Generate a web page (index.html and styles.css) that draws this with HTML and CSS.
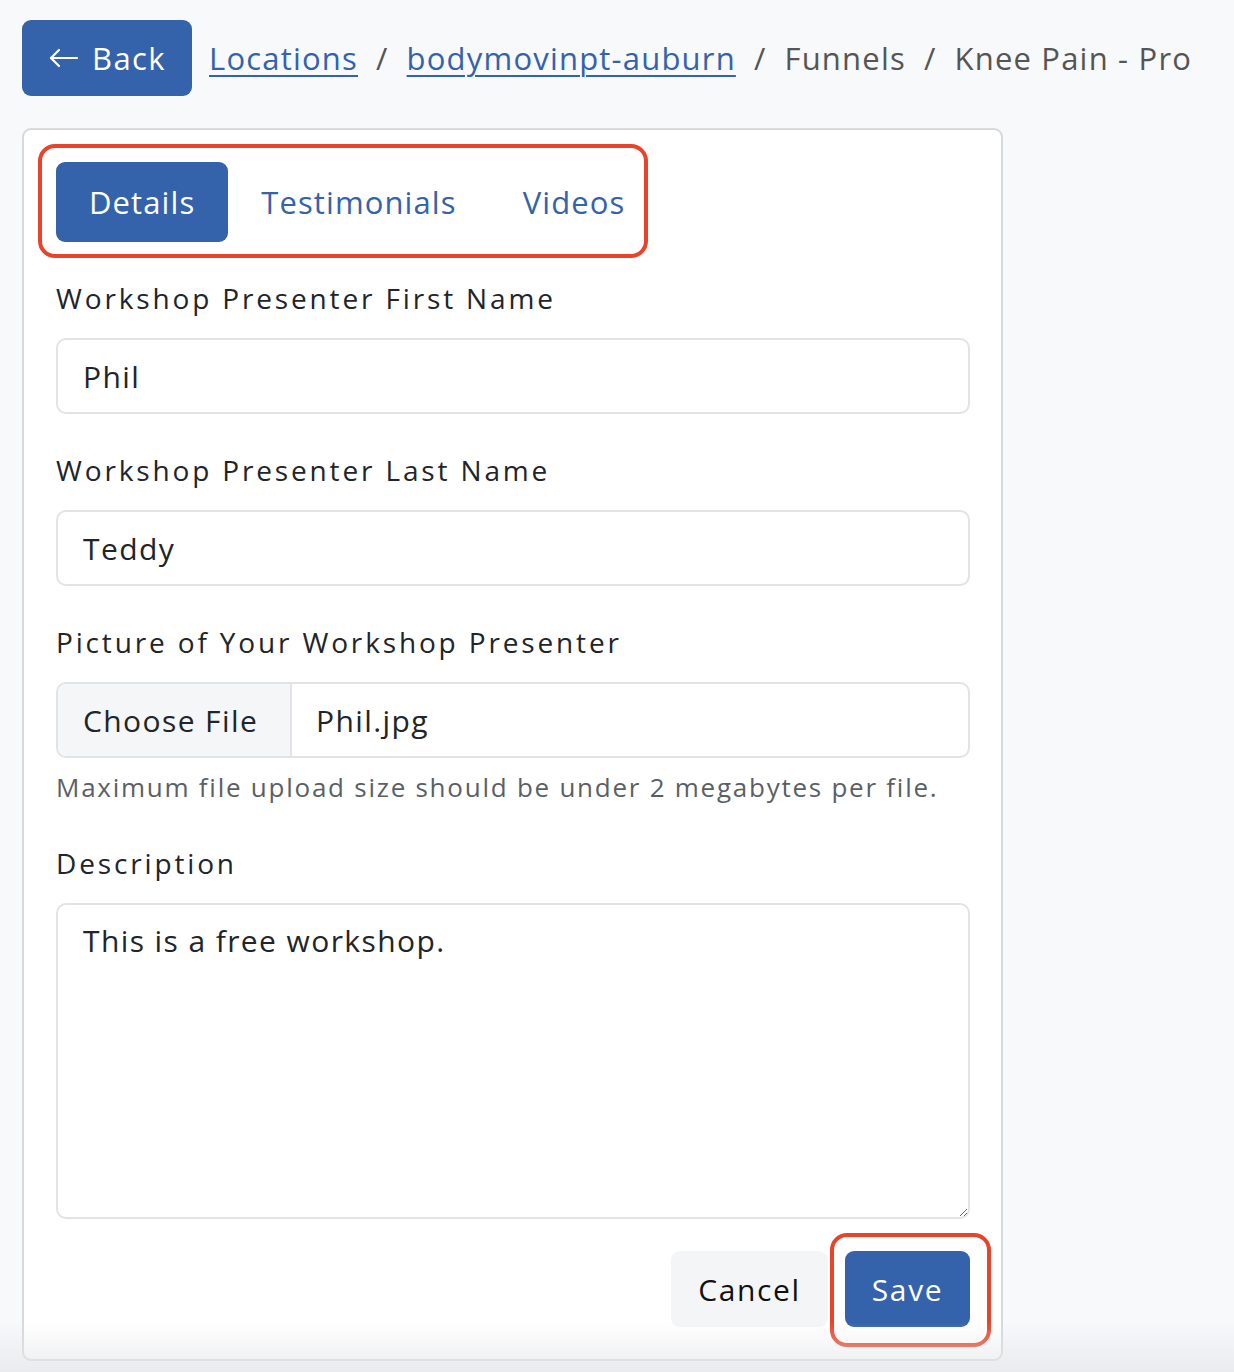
FILE: index.html
```html
<!DOCTYPE html>
<html lang="en">
<head>
<meta charset="utf-8">
<title>Knee Pain - Pro</title>
<link rel="stylesheet" href="styles.css">
</head>
<body>
<div class="page">
  <header class="topbar">
    <a class="back-btn" href="#"><svg class="back-arrow" width="30" height="20" viewBox="0 0 30 20" fill="none" stroke="#fff" stroke-width="2.2" stroke-linecap="round" stroke-linejoin="round"><path d="M28 10H2"/><path d="M10 2L2 10l8 8"/></svg><span>Back</span></a>
    <nav class="crumbs">
      <a href="#" class="crumb-link">Locations</a>
      <span class="sep">/</span>
      <a href="#" class="crumb-link">bodymovinpt-auburn</a>
      <span class="sep">/</span>
      <span class="crumb">Funnels</span>
      <span class="sep">/</span>
      <span class="crumb">Knee Pain - Pro</span>
    </nav>
  </header>

  <main class="card">
    <div class="tabs">
      <span class="highlight tabs-highlight"></span>
      <a href="#" class="tab active">Details</a>
      <a href="#" class="tab">Testimonials</a>
      <a href="#" class="tab">Videos</a>
    </div>

    <form class="form">
      <div class="field">
        <label class="label" for="first">Workshop Presenter First Name</label>
        <input class="input" id="first" type="text" value="Phil">
      </div>
      <div class="field">
        <label class="label" for="last">Workshop Presenter Last Name</label>
        <input class="input" id="last" type="text" value="Teddy">
      </div>
      <div class="field field-file">
        <label class="label">Picture of Your Workshop Presenter</label>
        <div class="file">
          <span class="file-btn">Choose File</span>
          <span class="file-name">Phil.jpg</span>
        </div>
        <p class="help">Maximum file upload size should be under 2 megabytes per file.</p>
      </div>
      <div class="field field-desc">
        <label class="label" for="desc">Description</label>
        <textarea class="textarea" id="desc">This is a free workshop.</textarea>
      </div>
      <div class="actions">
        <button type="button" class="btn btn-light">Cancel</button>
        <div class="save-wrap">
          <span class="highlight save-highlight"></span>
          <button type="button" class="btn btn-primary">Save</button>
        </div>
      </div>
    </form>
  </main>
</div>
<div class="bottom-fade"></div>
</body>
</html>
```
FILE: styles.css
```css
* { box-sizing: border-box; }
html, body { margin: 0; }
body {
  background: #f8f9fb;
  font-family: "Open Sans", "Liberation Sans", sans-serif;
  color: #212529;
}
.page {
  padding: 20px 0 0 22px;
}
.topbar {
  display: flex;
  align-items: center;
  gap: 17px;
}
.back-btn {
  display: flex;
  align-items: center;
  gap: 13px;
  height: 76px;
  width: 170px;
  padding: 0 0 0 27px;
  background: #3462ab;
  color: #fff;
  border-radius: 9px;
  text-decoration: none;
  font-size: 31px;
  letter-spacing: 1.4px;
}
.back-arrow { flex: none; }
.crumbs {
  display: flex;
  align-items: baseline;
  gap: 18px;
  font-size: 31px;
  letter-spacing: 1.2px;
  color: #555;
}
.crumb-link {
  color: #3462ab;
  text-decoration: underline;
  text-decoration-thickness: 2px;
  text-underline-offset: 5px;
}
.sep { color: #555; }
.crumb { color: #555; }

.card {
  margin-top: 32px;
  width: 981px;
  background: #fff;
  border: 2px solid #d8d9db;
  border-radius: 9px;
  padding: 32px 32px 32px 32px;
}
.tabs {
  position: relative;
  display: flex;
  width: fit-content;
}
.highlight {
  position: absolute;
  border: 4px solid #e8432b;
  border-radius: 17px;
  pointer-events: none;
}
.tabs-highlight {
  left: -18px;
  top: -18px;
  right: -10px;
  bottom: -16px;
}
.tab {
  display: flex;
  align-items: center;
  height: 80px;
  padding: 0 33px;
  font-size: 31px;
  letter-spacing: 1.1px;
  color: #3462ab;
  text-decoration: none;
  border-radius: 9px;
}
.tab:last-child { padding-right: 13px; }
.tab.active {
  background: #3462ab;
  color: #fff;
}

.form {
  display: flex;
  flex-direction: column;
  margin-top: 36px;
}
.field {
  display: flex;
  flex-direction: column;
  margin-bottom: 36px;
}
.field-file { margin-bottom: 38px; }
.field-desc { margin-bottom: 32px; }
.label {
  font-size: 28px;
  line-height: 40px;
  letter-spacing: 2.85px;
  color: #212529;
  margin-bottom: 20px;
}
.input, .file, .textarea {
  width: 914px;
  border: 2px solid #e1e3e7;
  border-radius: 10px;
  background: #fff;
  font-family: inherit;
  font-size: 30px;
  letter-spacing: 1.4px;
  color: #212529;
}
.input {
  height: 76px;
  padding: 0 25px;
  outline: none;
}
.file {
  display: flex;
  height: 76px;
  overflow: hidden;
}
.file-btn {
  display: flex;
  align-items: center;
  width: 234px;
  flex: none;
  padding-left: 25px;
  background: #f5f6f8;
  border-right: 2px solid #e1e3e7;
}
.file-name {
  display: flex;
  align-items: center;
  padding-left: 24px;
}
.help {
  margin: 11px 0 0;
  font-size: 26px;
  line-height: 36px;
  letter-spacing: 1.75px;
  color: #5a5f66;
}
.textarea {
  height: 316px;
  padding: 18px 25px;
  line-height: 36px;
  resize: vertical;
  outline: none;
}
.actions {
  display: flex;
  justify-content: flex-end;
  gap: 17px;
  width: 914px;
}
.btn {
  height: 76px;
  border: none;
  border-radius: 9px;
  font-family: inherit;
  font-size: 30px;
  letter-spacing: 1.6px;
  padding: 0;
  cursor: pointer;
}
.btn-light {
  background: #f4f5f7;
  color: #111;
  width: 157px;
}
.btn-primary {
  background: #3462ab;
  color: #fff;
  width: 125px;
}
.save-wrap {
  position: relative;
  display: flex;
}
.save-highlight {
  left: -15px;
  top: -18px;
  right: -21px;
  bottom: -20px;
}
.bottom-fade {
  position: fixed;
  left: 0;
  right: 0;
  bottom: 0;
  height: 50px;
  background: linear-gradient(to bottom, rgba(230,231,234,0), rgba(228,229,232,0.7));
  pointer-events: none;
}
```
